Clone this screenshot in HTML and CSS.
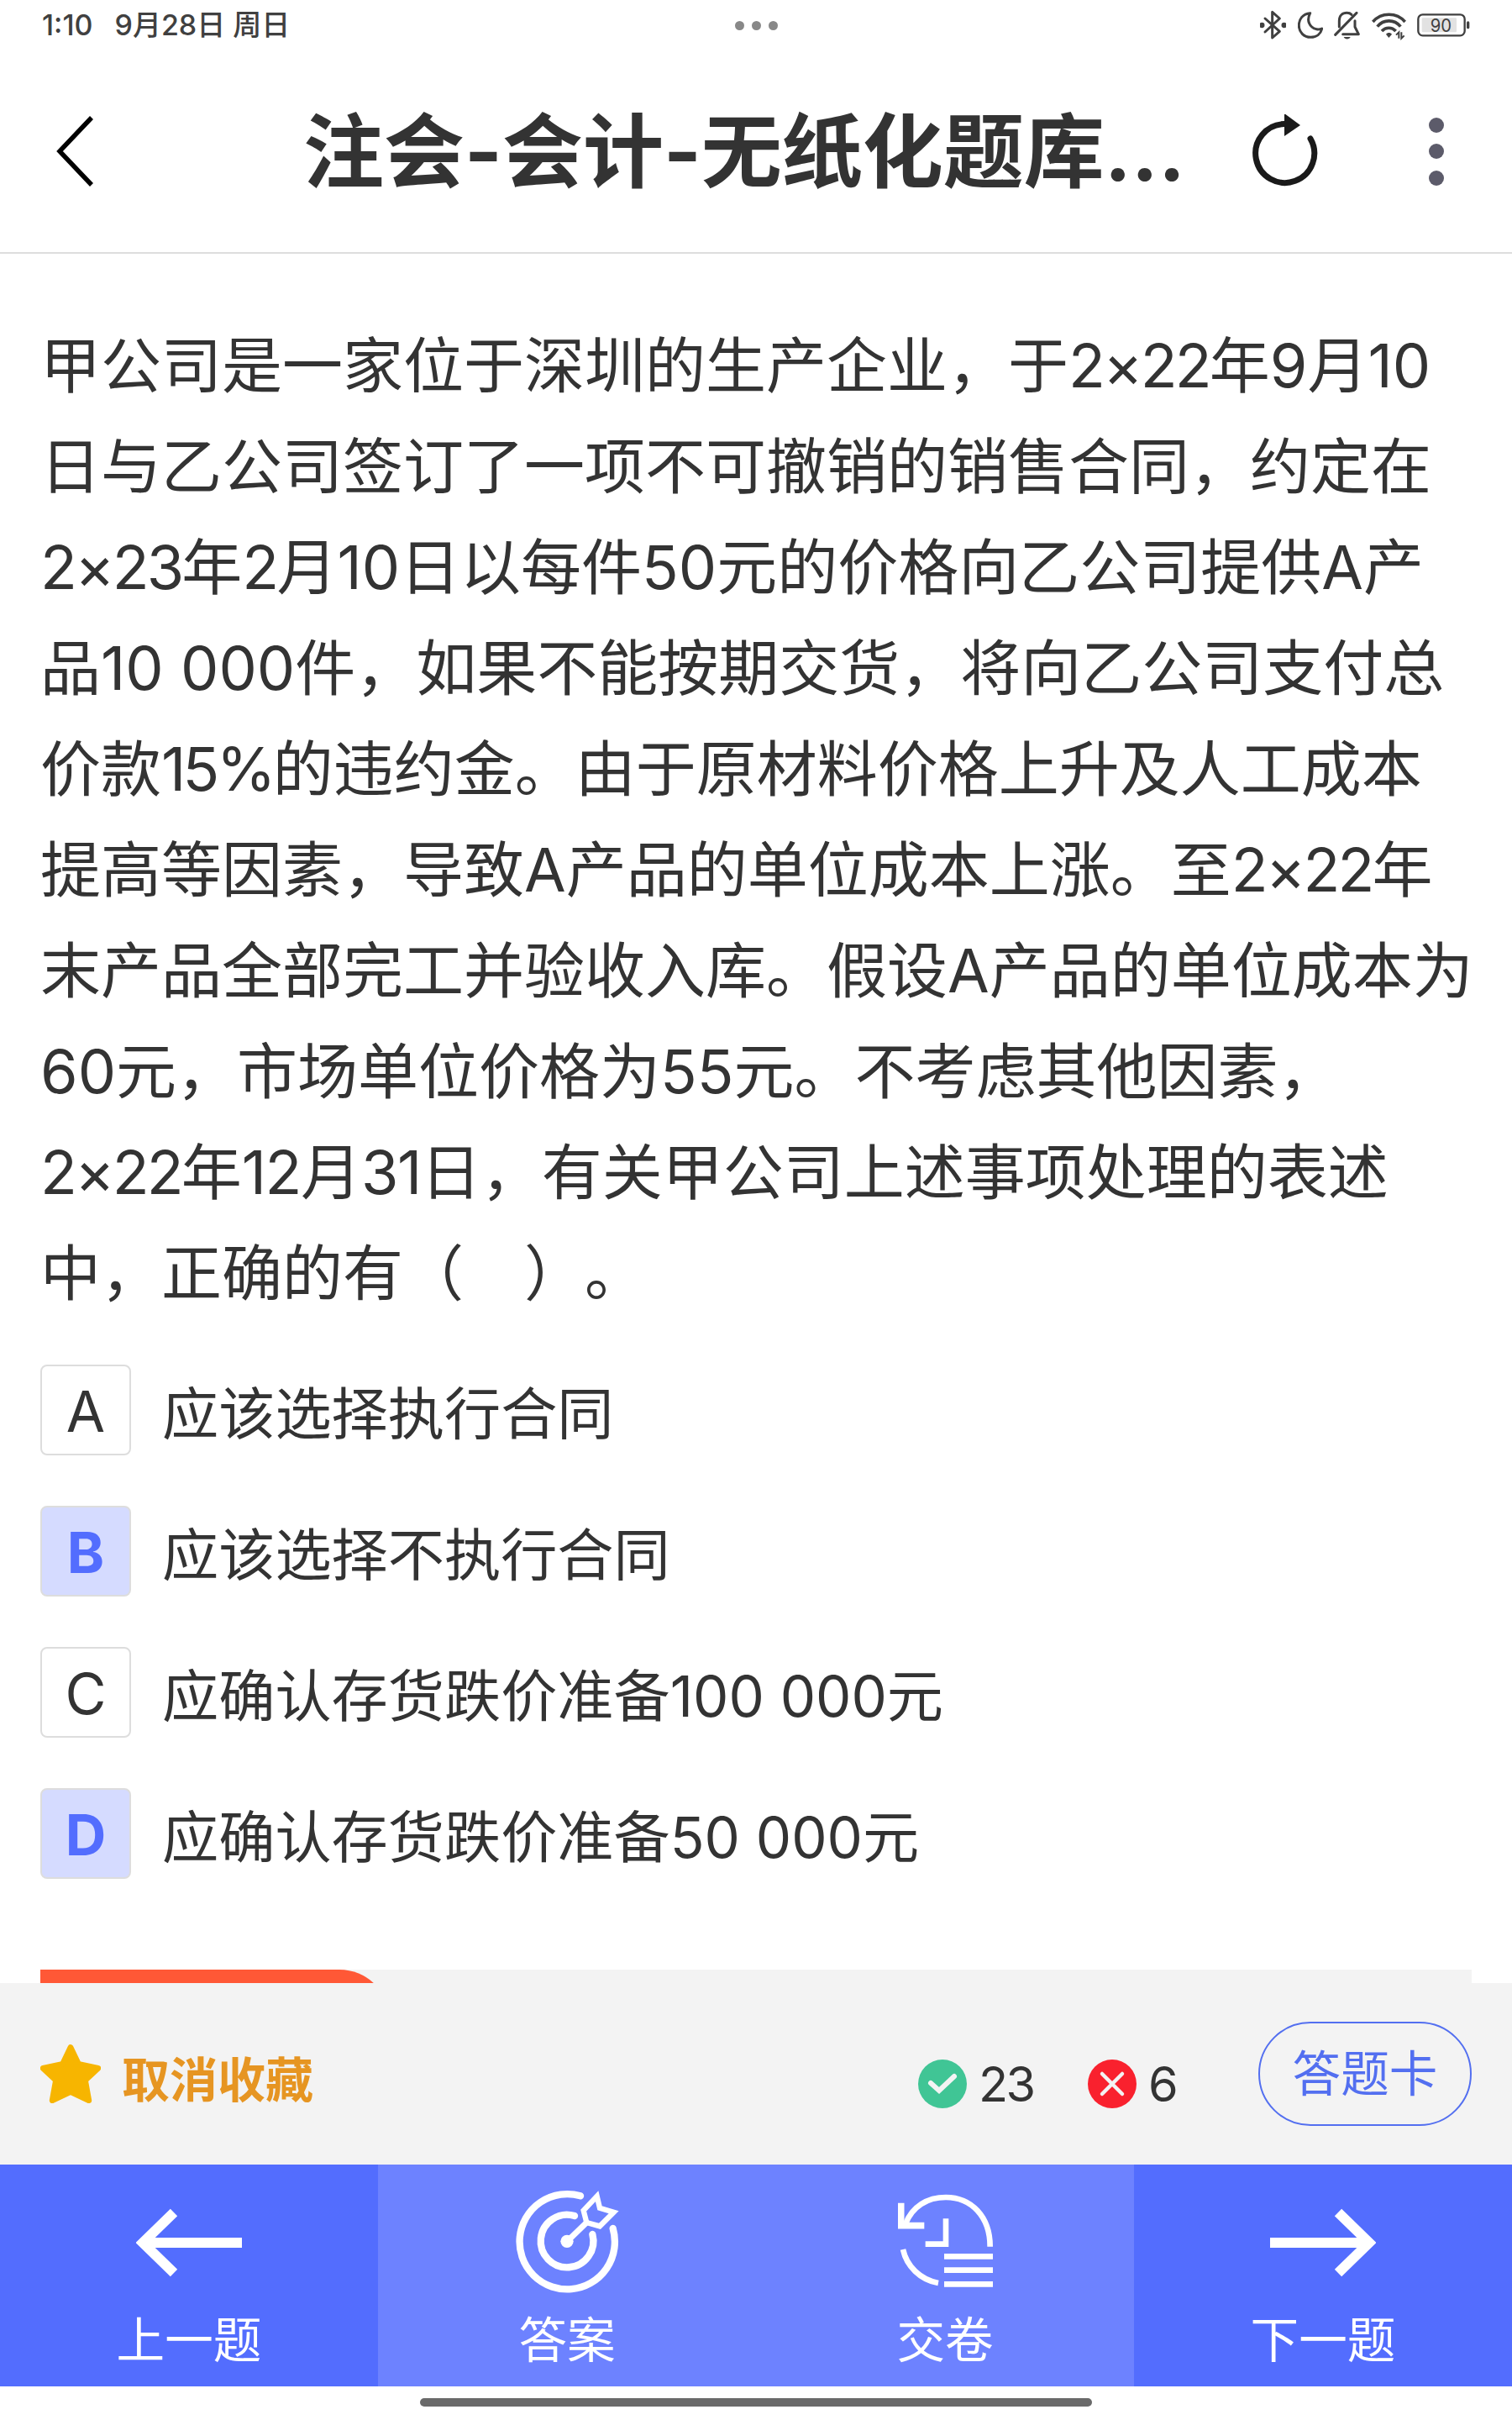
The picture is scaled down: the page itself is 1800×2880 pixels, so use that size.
FILE: index.html
```html
<!DOCTYPE html>
<html lang="zh-CN">

<head>
    <meta charset="UTF-8">
    <meta name="viewport" content="width=device-width, initial-scale=1.0">
    <title>注会-会计-无纸化题库</title>
    <link rel="stylesheet" href="styles.css">
</head>

<body>
    <div class="status-bar">
        <div class="status-left">
            <span class="time">1:10</span>
            <span class="date">9月28日 周日</span>
        </div>
        <div class="status-dots"><i></i><i></i><i></i></div>
        <div class="status-icons">
            <svg width="31" height="36" viewBox="62 36 93 108" fill="none" stroke="#404040" stroke-width="9" stroke-linejoin="round" stroke-linecap="round">
                <path d="M80 66L132 112L106 135V43L132 66L80 114" />
                <circle cx="69" cy="90" r="5" fill="#404040" />
                <circle cx="148" cy="90" r="5" fill="#404040" />
            </svg>
            <svg width="30" height="36" viewBox="195 36 90 108" fill="none" stroke="#404040" stroke-width="9" stroke-linejoin="round">
                <path d="M239 47C213 49 199 68 199 91C199 115 217 133 241 133C262 133 277 121 281 102C270 107 254 105 245 96C231 83 230 65 239 47Z" />
            </svg>
            <svg width="31" height="36" viewBox="328 36 93 108" fill="none" stroke="#404040" stroke-width="9" stroke-linecap="round" stroke-linejoin="round">
                <path d="M333 124L409 46" />
                <path d="M347 96V74C347 56 358 46 374 46C381 46 387 48 391 52" />
                <path d="M403 74V96L416 122H360" />
                <path d="M363 132H387C384 142 366 142 363 132Z" fill="#404040" stroke="none" />
            </svg>
            <svg width="41" height="36" viewBox="458 36 123 108" fill="none" stroke="#404040" stroke-width="11">
                <path d="M462 78C492 43 547 43 577 78" />
                <path d="M478 95C500 68 539 68 561 95" />
                <path d="M494 111C508 96 530 96 544 111" />
                <path d="M509 122C514 115 525 115 530 122L519 135Z" fill="#404040" stroke="none" />
                <path d="M555 137V115L545 125M564 115V137L574 127" stroke-width="6" />
            </svg>
            <svg class="battery" width="63" height="36" viewBox="621 36 189 108">
                <rect x="625" y="52" width="166" height="75" rx="16" fill="none" stroke="#404040" stroke-width="7" />
                <rect x="638" y="64" width="124" height="51" rx="4" fill="#e2e2e2" />
                <rect x="798" y="76" width="10" height="27" rx="5" fill="#404040" />
                <text x="706" y="114" text-anchor="middle" font-size="64" textLength="76" lengthAdjust="spacingAndGlyphs">90</text>
            </svg>
        </div>
    </div>

    <div class="header">
        <svg class="back-button" width="44" height="84" viewBox="0 0 44 84">
            <path d="M42 2L4 42L42 82" fill="none" stroke="#000" stroke-width="5.5" />
        </svg>
        <div class="title">注会-会计-无纸化题库...</div>
        <svg class="refresh" width="78" height="88" viewBox="0 0 78 88">
            <path d="M38 11.5A35 35 0 1 0 69 29" fill="none" stroke="#1a1a1a" stroke-width="7" stroke-linecap="round" />
            <path d="M38 -1L57 13L38 26Z" fill="#1a1a1a" />
        </svg>
        <div class="more"><i></i><i></i><i></i></div>
    </div>

    <div class="content">
        <div class="question">
            甲公司是一家位于深圳的生产企业，于<span class="year">2×22</span>年9月10<br>
            日与乙公司签订了一项不可撤销的销售合同，约定在<br>
            <span class="year">2×23</span>年<span class="year">2</span>月10日以每件50元的价格向乙公司提供A产<br>
            品10 000件，如果不能按期交货，将向乙公司支付总<br>
            价款<span class="percent">15%</span>的违约金。由于原材料价格上升及人工成本<br>
            提高等因素，导致A产品的单位成本上涨。至<span class="year">2×22</span>年<br>
            末产品全部完工并验收入库。假设A产品的单位成本为<br>
            60元，市场单位价格为55元。不考虑其他因素，<br>
            <span class="year">2×22</span>年<span class="day">12</span>月<span class="day">31</span>日，有关甲公司上述事项处理的表述<br>
            中，正确的有（　）。
        </div>
        <div class="options">
            <div class="option">
                <div class="letter">A</div>
                <div class="option-text">应该选择执行合同</div>
            </div>
            <div class="option selected">
                <div class="letter">B</div>
                <div class="option-text">应该选择不执行合同</div>
            </div>
            <div class="option">
                <div class="letter">C</div>
                <div class="option-text">应确认存货跌价准备100 000元</div>
            </div>
            <div class="option selected">
                <div class="letter">D</div>
                <div class="option-text">应确认存货跌价准备50 000元</div>
            </div>
        </div>
        <div class="answer-panel">
            <div class="answer-tab"></div>
        </div>
    </div>

    <div class="toolbar">
        <div class="favorite">
            <svg width="72" height="70" viewBox="54 39 216 210">
                <path d="M162 50L190 109L260 124L214 167L227 239L162 208L97 239L110 167L64 124L134 109Z" fill="#f7b500" stroke="#f7b500" stroke-width="21" stroke-linejoin="round" />
            </svg>
            <span>取消收藏</span>
        </div>
        <div class="score">
            <svg width="58" height="58" viewBox="0 0 58 58">
                <circle cx="29" cy="29" r="29" fill="#40c595" />
                <path d="M15 28L25 37L43 20" fill="none" stroke="#f3f3f3" stroke-width="6" stroke-linecap="round" />
            </svg>
            <span>23</span>
        </div>
        <div class="score wrong">
            <svg width="58" height="58" viewBox="0 0 58 58">
                <circle cx="29" cy="29" r="29" fill="#f9212e" />
                <path d="M17 17L41 41M41 17L17 41" fill="none" stroke="#f3f3f3" stroke-width="4.5" stroke-linecap="round" />
            </svg>
            <span>6</span>
        </div>
        <div class="card-button">答题卡</div>
    </div>

    <div class="nav">
        <div class="nav-item">
            <svg width="126" height="124" viewBox="0 0 126 124">
                <path d="M126 63H8M45 27L8 63L45 99" fill="none" stroke="#fff" stroke-width="12" />
            </svg>
            <span>上一题</span>
        </div>
        <div class="nav-item light">
            <svg width="124" height="124" viewBox="99 48 372 372" fill="none" stroke="#fff" stroke-width="25" stroke-linecap="round">
                <path d="M333 70A170 170 0 1 0 449 186" />
                <path d="M312 141A94 94 0 1 0 376 207" />
                <path d="M290 228L355 165" stroke-width="21" />
                <circle cx="285" cy="232" r="23" fill="#fff" stroke="none" />
                <path d="M344 122L392 71L402 113L452 128L402 178L355 165Z" stroke-width="19" />
            </svg>
            <span>答案</span>
        </div>
        <div class="nav-item light">
            <svg width="113" height="124" viewBox="57 33 339 372" fill="none" stroke="#fff" stroke-width="20">
                <path d="M84 155C108 92 162 60 228 60C318 60 386 128 386 236" />
                <path d="M68 80V161H151" stroke-width="23" />
                <path d="M75 246C88 306 136 354 201 366" />
                <path d="M228 136V227H155" />
                <path d="M222 271H396M222 320H396M222 370H396" />
            </svg>
            <span>交卷</span>
        </div>
        <div class="nav-item">
            <svg width="126" height="124" viewBox="0 0 126 124">
                <path d="M0 63H118M81 27L118 63L81 99" fill="none" stroke="#fff" stroke-width="12" />
            </svg>
            <span>下一题</span>
        </div>
    </div>
    <div class="home-bar"></div>
</body>

</html>
```
FILE: styles.css
```css
body {
    font-family: Inter, 'Noto Sans CJK SC', sans-serif;
    background-color: #ffffff;
    color: #333333;
    margin: 0;
    width: 1800px;
    height: 2880px;
    overflow: hidden;
    display: flex;
    flex-direction: column;
    text-spacing-trim: space-all;
}

svg {
    display: block;
    flex-shrink: 0;
}

.status-bar {
    height: 60px;
    padding: 0 50px;
    display: grid;
    grid-template-columns: 1fr auto 1fr;
    align-items: center;
    box-sizing: border-box;
    color: #404040;
    font-size: 34px;
    font-weight: 500;
}

.status-left {
    display: flex;
    align-items: baseline;
    gap: 26px;
    line-height: 60px;
    white-space: nowrap;
}

.status-dots {
    display: flex;
    gap: 9px;
}

.status-dots i {
    width: 11px;
    height: 11px;
    border-radius: 50%;
    background: #888888;
}

.status-icons {
    display: flex;
    justify-content: flex-end;
    gap: 13.5px;
}

.battery text {
    fill: #404040;
    font-weight: 400;
}

.header {
    height: 242px;
    padding: 0 81px 0 67px;
    display: flex;
    align-items: center;
    box-sizing: border-box;
    border-bottom: 2px solid #dddddd;
}

.title {
    flex: 1;
    font-size: 96px;
    line-height: 120px;
    font-weight: bold;
    padding-left: 250px;
    white-space: nowrap;
}

.refresh {
    margin-right: 132px;
}

.more {
    display: flex;
    flex-direction: column;
    gap: 13.5px;
}

.more i {
    width: 18px;
    height: 18px;
    border-radius: 50%;
    background: #5c5b6a;
}

.content {
    flex: 1;
    padding: 73px 48px 0;
    overflow: hidden;
    display: flex;
    flex-direction: column;
}

.question {
    font-size: 72px;
    line-height: 120px;
    white-space: nowrap;
}

.year {
    letter-spacing: -2.9px;
}

.percent {
    letter-spacing: -3.7px;
}

.day {
    letter-spacing: -1.5px;
}

.options {
    margin-top: 49px;
    display: flex;
    flex-direction: column;
    gap: 60px;
}

.option {
    display: flex;
    align-items: center;
    gap: 37px;
    font-size: 67.2px;
    line-height: 108px;
}

.option-text {
    height: 108px;
    line-height: 118px;
}

.letter {
    width: 108px;
    height: 108px;
    line-height: 108px;
    box-sizing: border-box;
    border: 2px solid #dddddd;
    border-radius: 8px;
    text-align: center;
}

.selected .letter {
    background: #d5dbff;
    color: #536dfe;
    font-weight: bold;
}

.answer-panel {
    margin-top: 108px;
    height: 200px;
    flex-shrink: 0;
    background: #f3f3f3;
}

.answer-tab {
    width: 416px;
    height: 120px;
    background: #ff5836;
    border-radius: 0 60px 60px 0;
}

.toolbar {
    height: 216px;
    padding: 0 48px;
    display: flex;
    align-items: center;
    box-sizing: border-box;
    background: #f3f3f3;
    font-size: 57.6px;
}

.favorite {
    flex: 1;
    display: flex;
    align-items: center;
    gap: 25px;
    color: #e69522;
    font-weight: bold;
}

.favorite span {
    font-size: 57px;
    padding-top: 6px;
}

.score {
    display: flex;
    align-items: center;
    gap: 14px;
    width: 202px;
    padding-top: 24px;
    letter-spacing: -2.5px;
}

.score.wrong {
    width: 203px;
}

.card-button {
    width: 254px;
    height: 124px;
    line-height: 120px;
    box-sizing: border-box;
    border: 2px solid #536ff0;
    border-radius: 62px;
    color: #536ff0;
    text-align: center;
}

.nav {
    height: 264px;
    display: grid;
    grid-template-columns: repeat(4, 1fr);
    color: #ffffff;
    font-size: 57.6px;
}

.nav-item {
    display: flex;
    flex-direction: column;
    align-items: center;
    padding-top: 30px;
    background: #536dfe;
}

.nav-item.light {
    background: #6d82ff;
}

.nav-item span {
    line-height: 80px;
    margin-top: 15px;
}

.home-bar {
    width: 800px;
    height: 10px;
    margin: 14px auto 16px;
    border-radius: 5px;
    background: #6a6a6a;
}
```
